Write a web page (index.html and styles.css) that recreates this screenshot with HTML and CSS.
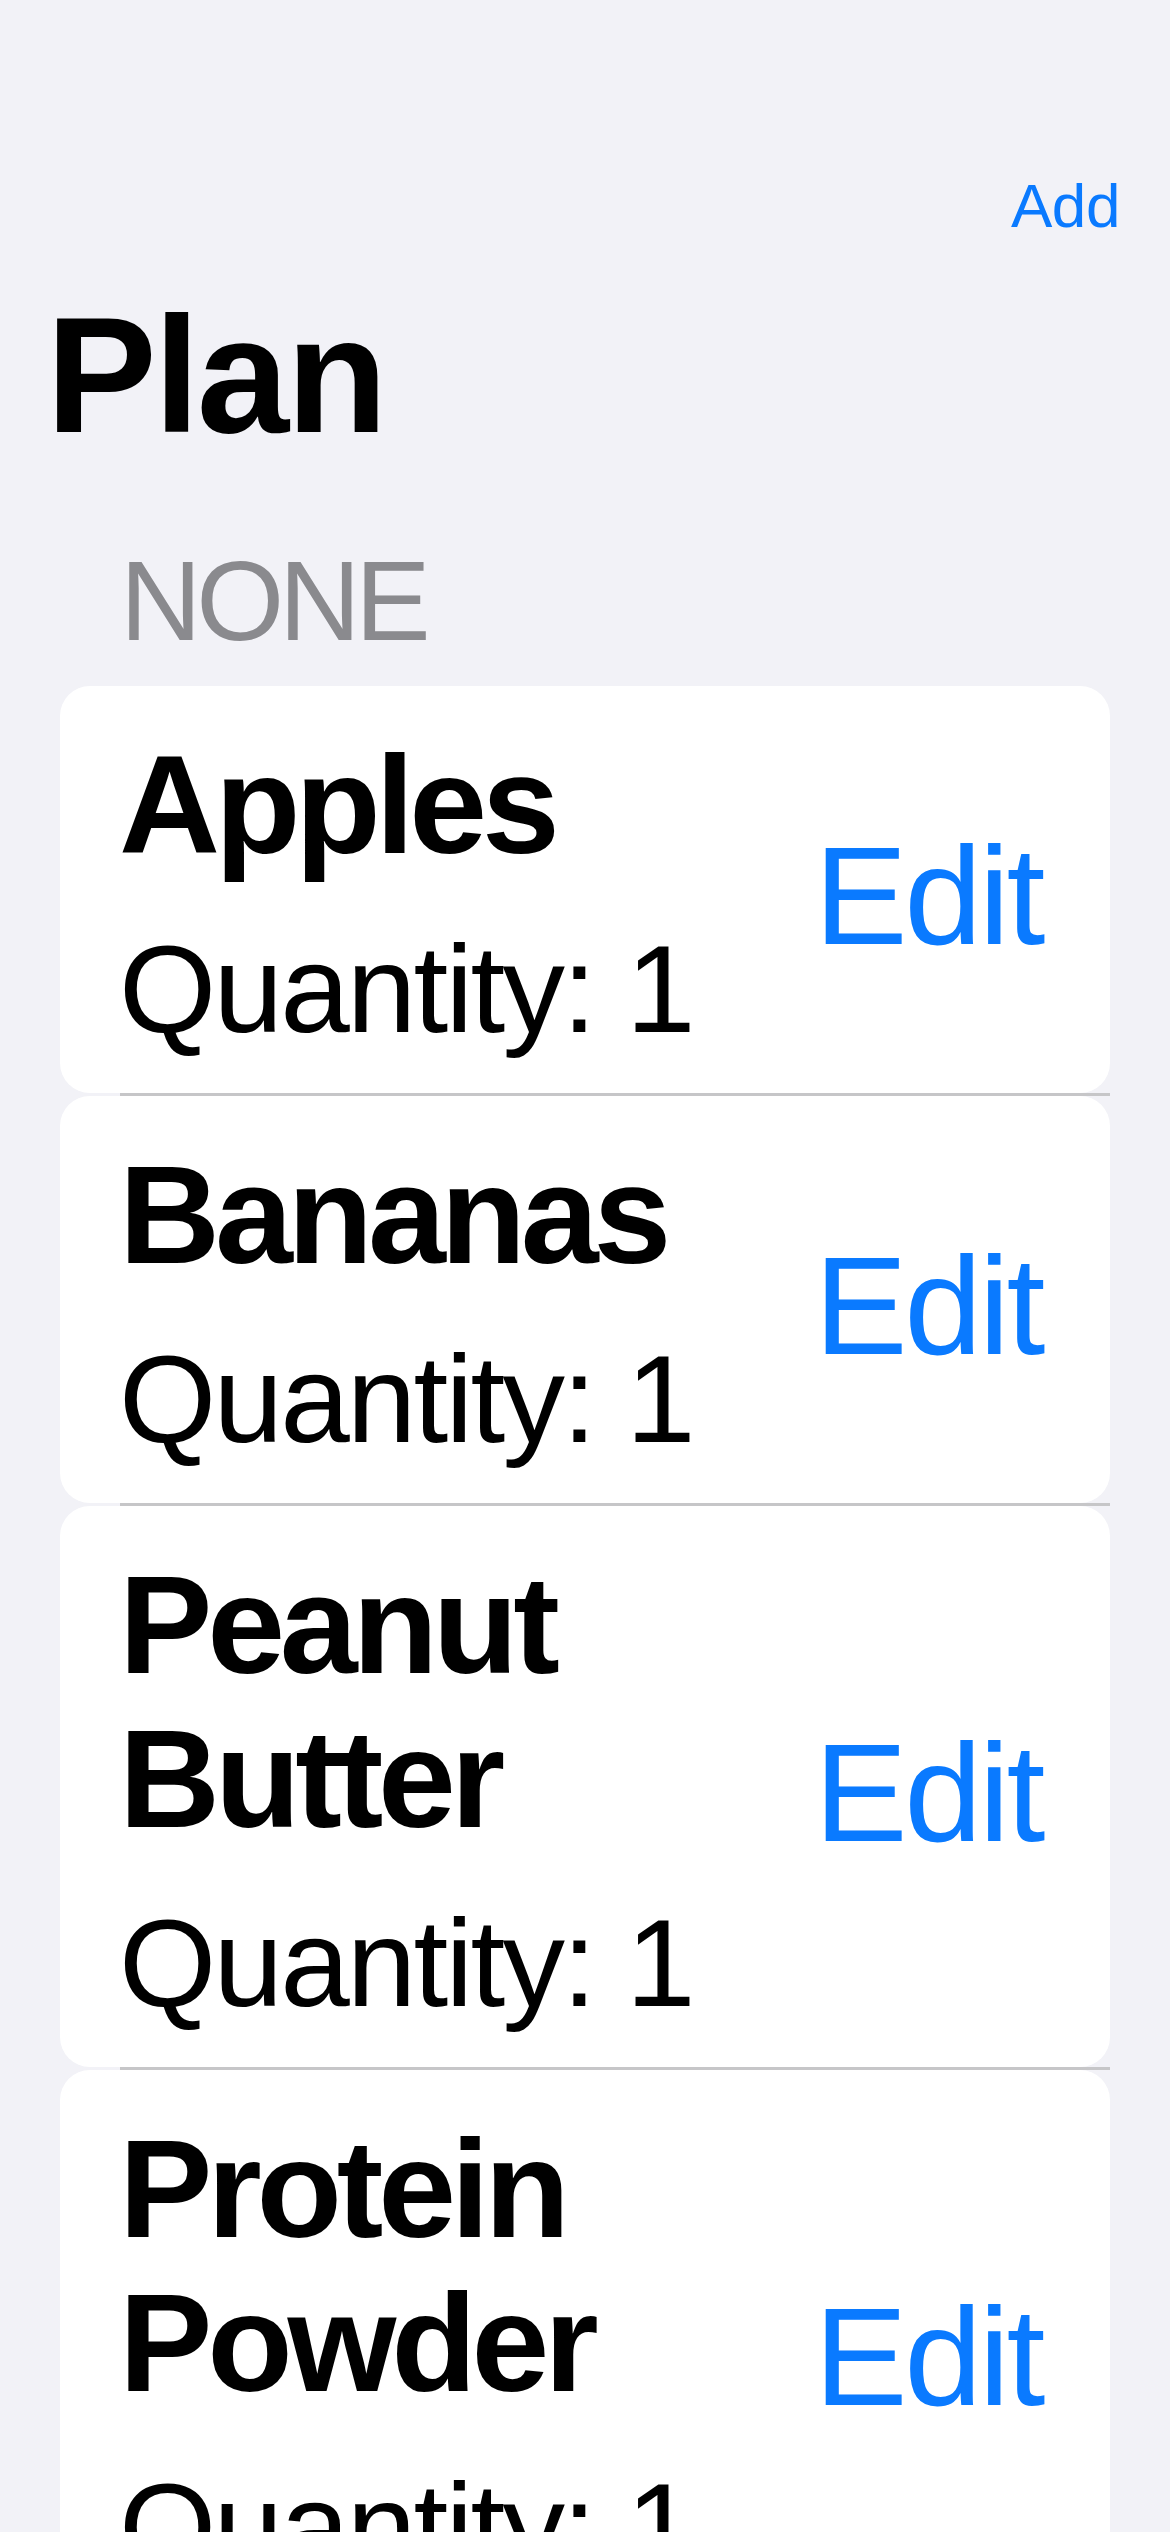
FILE: index.html
```html
<!DOCTYPE html>
<html lang="en">
<head>
<meta charset="utf-8">
<title>Plan</title>
<link rel="stylesheet" href="styles.css">
</head>
<body>
<div class="screen">
  <header class="nav">
    <div class="nav-bar">
      <span class="nav-action">Add</span>
    </div>
    <h1 class="large-title">Plan</h1>
  </header>
  <section class="group">
    <h2 class="group-header">NONE</h2>
    <ul class="list">
      <li class="row">
        <div class="row-text">
          <div class="row-title">Apples</div>
          <div class="row-sub">Quantity: 1</div>
        </div>
        <span class="row-action">Edit</span>
      </li>
      <li class="row">
        <div class="row-text">
          <div class="row-title">Bananas</div>
          <div class="row-sub">Quantity: 1</div>
        </div>
        <span class="row-action">Edit</span>
      </li>
      <li class="row">
        <div class="row-text">
          <div class="row-title">Peanut Butter</div>
          <div class="row-sub">Quantity: 1</div>
        </div>
        <span class="row-action">Edit</span>
      </li>
      <li class="row">
        <div class="row-text">
          <div class="row-title">Protein Powder</div>
          <div class="row-sub">Quantity: 1</div>
        </div>
        <span class="row-action">Edit</span>
      </li>
    </ul>
  </section>
</div>
</body>
</html>
```
FILE: styles.css
```css
html, body {
  margin: 0;
  padding: 0;
  background: #f2f2f7;
  overflow: hidden;
}

.screen {
  width: 1170px;
  height: 2532px;
  overflow: hidden;
  font-family: "Liberation Sans", Arial, sans-serif;
  color: #000;
}

.nav {
  padding-top: 170px;
}

.nav-bar {
  display: flex;
  justify-content: flex-end;
  padding-right: 50px;
  height: 72px;
}

.nav-action {
  font-size: 62px;
  line-height: 72px;
  letter-spacing: -0.4px;
  color: #0a7aff;
}

.large-title {
  margin: 38px 0 0 0;
  padding-left: 46px;
  font-size: 166px;
  line-height: 190px;
  font-weight: 700;
  letter-spacing: -3px;
}

.group {
  margin-top: 66px;
}

.group-header {
  margin: 0;
  padding-left: 120px;
  font-size: 113px;
  line-height: 130px;
  font-weight: 400;
  letter-spacing: -5.3px;
  color: #8a8a8e;
}

.list {
  list-style: none;
  margin: 20px 60px 0 60px;
  padding: 0;
}

.row {
  position: relative;
  display: flex;
  align-items: center;
  background: #fff;
  border-radius: 30px;
  padding: 42px 68px 29px 59px;
  margin-bottom: 3px;
}

.row::after {
  content: "";
  position: absolute;
  left: 60px;
  right: 0;
  bottom: -3px;
  height: 3px;
  background: #c6c6c8;
}

.row:last-child::after {
  display: none;
}

.row-text {
  flex: 1;
  min-width: 0;
  padding-right: 40px;
}

.row-title {
  font-size: 140px;
  line-height: 154px;
  font-weight: 700;
  letter-spacing: -5.2px;
}

.row-sub {
  margin-top: 32px;
  font-size: 125px;
  line-height: 150px;
  letter-spacing: -2.8px;
}

.row-action {
  font-size: 140px;
  line-height: 160px;
  letter-spacing: -3.4px;
  color: #0a7aff;
  white-space: nowrap;
}
```
